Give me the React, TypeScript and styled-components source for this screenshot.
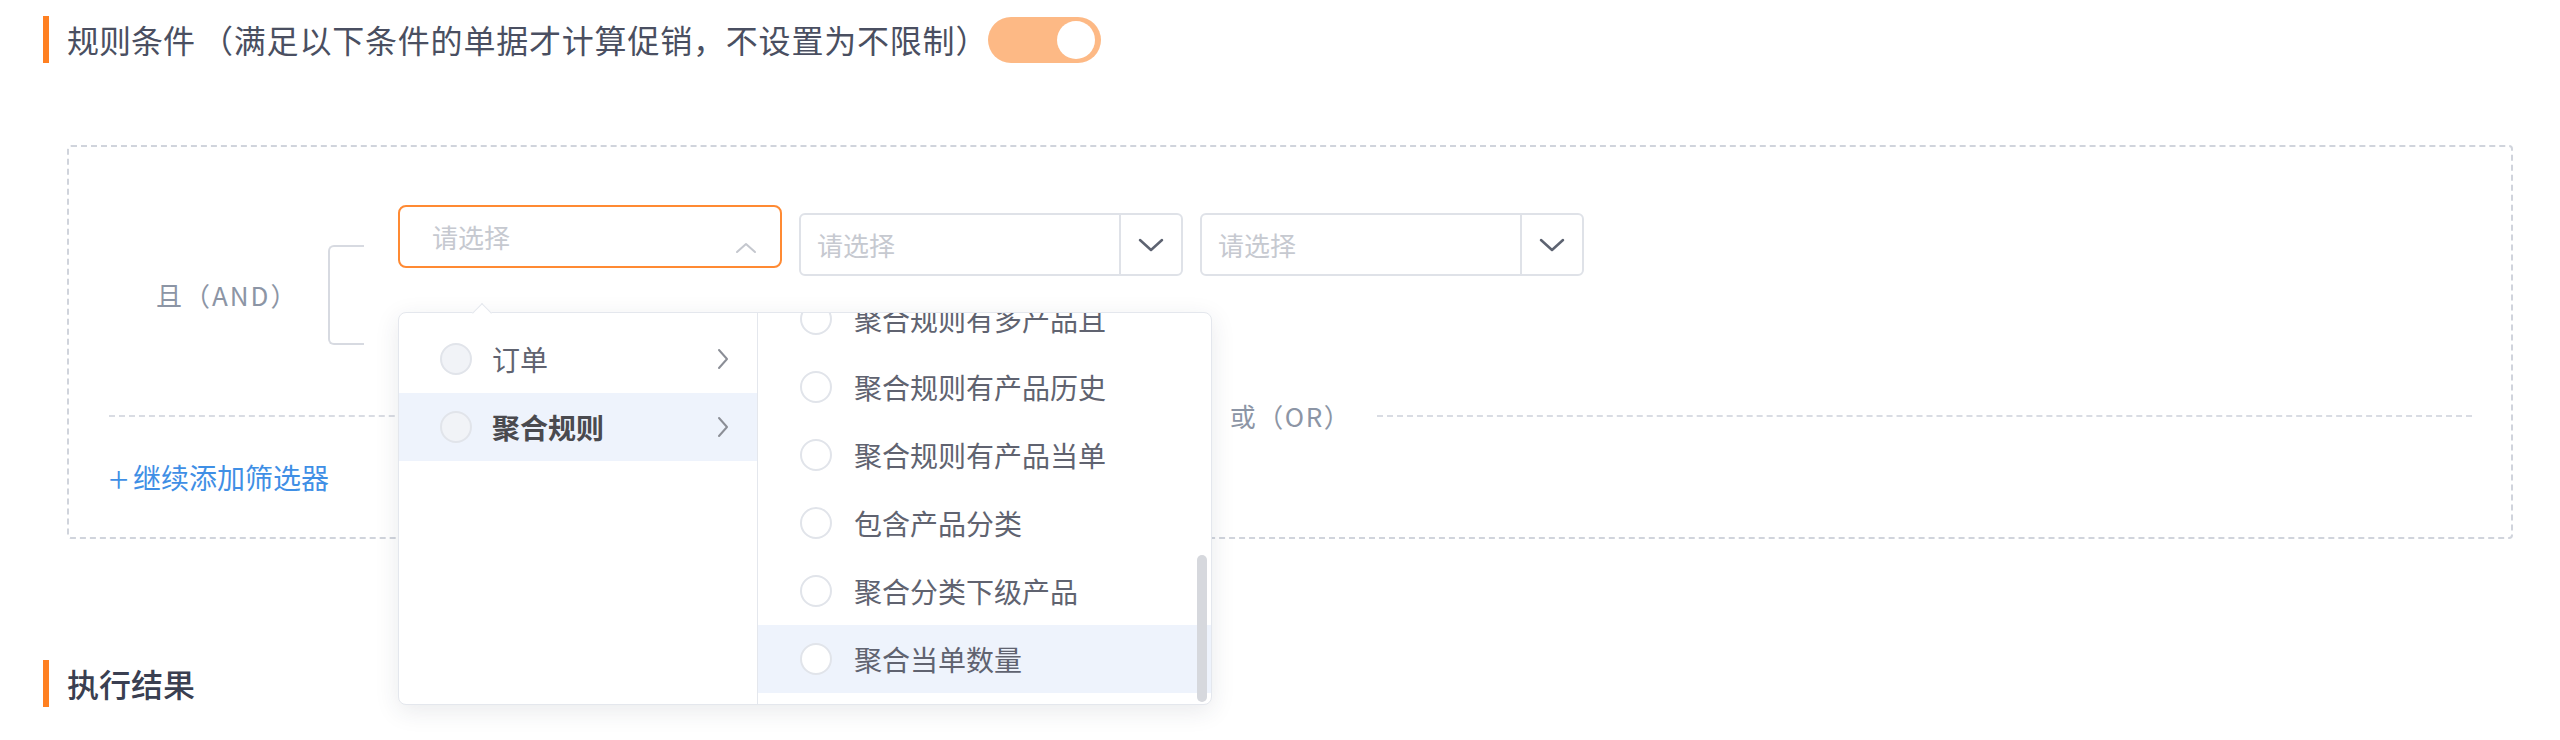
import React, { useLayoutEffect, useRef } from "react";
import styled, { createGlobalStyle } from "styled-components";

const GlobalStyle = createGlobalStyle`
  html, body { margin: 0; padding: 0; background: #ffffff; }
  body { font-family: "Noto Sans CJK SC", "Noto Sans", sans-serif; }
  * { box-sizing: border-box; }
`;

const Page = styled.div`
  width: 2560px;
  height: 740px;
  overflow: hidden;
  padding-top: 16px;
`;

const SectionHeader = styled.div<{ $top?: number }>`
  display: flex;
  align-items: center;
  height: 47px;
  margin-left: 43px;
  margin-top: ${(p) => p.$top ?? 0}px;
`;

const Bar = styled.span`
  width: 6px;
  height: 47px;
  background: #ff8021;
  flex-shrink: 0;
`;

const TitleText = styled.span<{ $strong?: boolean }>`
  margin-left: 18px;
  font-size: 32px;
  line-height: 47px;
  color: ${(p) => (p.$strong ? "#3a3f51" : "#4a4f61")};
  font-weight: ${(p) => (p.$strong ? 500 : 400)};
  white-space: nowrap;
`;

const TitleNote = styled.span`
  margin-left: 6px;
  font-size: 32px;
  line-height: 47px;
  letter-spacing: 0.8px;
  color: #4a4f61;
  white-space: nowrap;
`;

const Toggle = styled.div`
  margin-left: 0;
  width: 113px;
  height: 46px;
  border-radius: 23px;
  background: #fdb985;
  display: flex;
  align-items: center;
  justify-content: flex-end;
  padding-right: 6px;
`;

const Knob = styled.span`
  width: 38px;
  height: 38px;
  border-radius: 50%;
  background: #ffffff;
`;

const RuleBox = styled.div`
  margin: 82px 47px 0 67px;
  height: 394px;
  border: 2px dashed #d0d4dc;
  border-radius: 4px;
  padding: 58px 39px 40px 40px;
`;

const Group = styled.div`
  display: flex;
  align-items: flex-start;
  margin-left: 47px;
`;

const GroupSide = styled.div`
  display: flex;
  align-items: center;
  margin-top: 40px;
  height: 100px;
`;

const GroupLabel = styled.span`
  width: 172px;
  font-size: 26px;
  line-height: 36px;
  letter-spacing: 2px;
  color: #8c95a5;
  white-space: nowrap;
`;

const Bracket = styled.span`
  width: 36px;
  height: 100px;
  border: 2px solid #d7dae1;
  border-right: 0;
  border-radius: 6px 0 0 6px;
  margin-right: 34px;
`;

const Selects = styled.div`
  display: flex;
  align-items: flex-start;
  gap: 17px;
`;

const CascaderWrap = styled.div`
  position: relative;
  width: 384px;
`;

const CascaderInput = styled.div`
  height: 63px;
  border: 2px solid #ff8a33;
  border-radius: 8px;
  display: flex;
  align-items: center;
  justify-content: space-between;
  padding: 0 23px 0 32px;
  background: #fff;
`;

const Placeholder = styled.span`
  font-size: 26px;
  line-height: 36px;
  color: #c6c9d0;
  white-space: nowrap;
`;

const UpArrow = styled.svg`
  margin-top: 22px;
`;

const Select = styled.div`
  margin-top: 8px;
  width: 384px;
  height: 63px;
  border: 2px solid #dfe2e8;
  border-radius: 6px;
  display: flex;
  background: #fff;
`;

const SelectValue = styled.div`
  flex: 1;
  display: flex;
  align-items: center;
  padding-left: 16px;
`;

const SelectArrow = styled.div`
  width: 62px;
  border-left: 2px solid #dfe2e8;
  display: flex;
  align-items: center;
  justify-content: center;
`;

const Dropdown = styled.div`
  position: absolute;
  top: 107px;
  left: 0;
  width: 814px;
  height: 393px;
  display: flex;
  background: #fff;
  border: 1px solid #e4e7ed;
  border-radius: 8px;
  box-shadow: 0 6px 24px rgba(40, 50, 70, 0.1);
  z-index: 10;
`;

const Caret = styled.span`
  position: absolute;
  top: -7px;
  left: 76px;
  width: 14px;
  height: 14px;
  background: #fff;
  border-top: 1px solid #e4e7ed;
  border-left: 1px solid #e4e7ed;
  transform: rotate(45deg);
`;

const LeftCol = styled.div`
  width: 359px;
  flex-shrink: 0;
  border-right: 1px solid #e4e7ed;
  padding-top: 12px;
`;

const RightCol = styled.div`
  position: relative;
  flex: 1;
  overflow: hidden;
  border-radius: 0 8px 8px 0;
`;

const RightScroll = styled.div`
  height: 100%;
  overflow: hidden;
  padding: 12px 0 11px;
`;

const MenuItem = styled.div<{ $active?: boolean; $pad: number }>`
  height: 68px;
  display: flex;
  align-items: center;
  padding: 0 28px 0 ${(p) => p.$pad}px;
  background: ${(p) => (p.$active ? "#eef3fc" : "transparent")};
`;

const Radio = styled.span<{ $filled?: boolean }>`
  width: 32px;
  height: 32px;
  flex-shrink: 0;
  border-radius: 50%;
  border: 2px solid #e1e4ea;
  background: ${(p) => (p.$filled ? "#f1f3f7" : "#ffffff")};
`;

const ItemText = styled.span<{ $bold?: boolean; $gap: number }>`
  flex: 1;
  margin-left: ${(p) => p.$gap}px;
  font-size: 28px;
  line-height: 40px;
  color: ${(p) => (p.$bold ? "#4a4a4f" : "#606370")};
  font-weight: ${(p) => (p.$bold ? 700 : 400)};
  white-space: nowrap;
`;

const Thumb = styled.span`
  position: absolute;
  right: 4px;
  top: 242px;
  width: 10px;
  height: 147px;
  border-radius: 5px;
  background: #d6d8dd;
`;

const OrDivider = styled.div`
  display: flex;
  align-items: center;
  height: 36px;
  margin-top: 53px;
`;

const DashLine = styled.span`
  flex: 1;
  height: 0;
  border-top: 2px dashed #d9dce3;
`;

const OrText = styled.span`
  margin: 0 26px;
  font-size: 26px;
  line-height: 36px;
  letter-spacing: 1.5px;
  color: #8c95a5;
  white-space: nowrap;
`;

const AddLink = styled.a`
  display: inline-flex;
  align-items: center;
  margin-top: 23px;
  height: 40px;
  font-size: 28px;
  line-height: 40px;
  color: #3f8fe5;
  text-decoration: none;
  white-space: nowrap;
`;

const Plus = styled.span`
  width: 24px;
  font-size: 36px;
  font-weight: 300;
  line-height: 40px;
  text-align: left;
`;

const ChevronDown = () => (
  <svg width="26" height="14" viewBox="0 0 26 14">
    <path d="M2 2 L13 12 L24 2" fill="none" stroke="#5d6371" strokeWidth="2.5" strokeLinecap="round" strokeLinejoin="round" />
  </svg>
);

const ChevronRight = () => (
  <svg width="12" height="22" viewBox="0 0 12 22">
    <path d="M2 2 L10 11 L2 20" fill="none" stroke="#8b8e96" strokeWidth="2" strokeLinecap="round" strokeLinejoin="round" />
  </svg>
);

const leftItems = [
  { label: "订单", active: false },
  { label: "聚合规则", active: true },
];

const rightItems = [
  "聚合规则金额",
  "聚合规则数量",
  "聚合规则有产品",
  "聚合规则无产品",
  "聚合规则有产品分类",
  "聚合规则无产品分类",
  "聚合规则有多产品或",
  "聚合规则无多产品",
  "聚合规则历史金额",
  "聚合规则有多产品且",
  "聚合规则有产品历史",
  "聚合规则有产品当单",
  "包含产品分类",
  "聚合分类下级产品",
  "聚合当单数量",
];

export default function App() {
  const scrollRef = useRef<HTMLDivElement>(null);
  useLayoutEffect(() => {
    const el = scrollRef.current;
    if (el) el.scrollTop = el.scrollHeight;
  }, []);

  return (
    <Page>
      <GlobalStyle />
      <SectionHeader>
        <Bar />
        <TitleText>规则条件</TitleText>
        <TitleNote>（满足以下条件的单据才计算促销，不设置为不限制）</TitleNote>
        <Toggle>
          <Knob />
        </Toggle>
      </SectionHeader>

      <RuleBox>
        <Group>
          <GroupSide>
            <GroupLabel>且（AND）</GroupLabel>
            <Bracket />
          </GroupSide>
          <Selects>
            <CascaderWrap>
              <CascaderInput>
                <Placeholder>请选择</Placeholder>
                <UpArrow width="22" height="12" viewBox="0 0 22 12">
                  <path d="M2 10 L11 2 L20 10" fill="none" stroke="#c4c7ce" strokeWidth="2" strokeLinecap="round" strokeLinejoin="round" />
                </UpArrow>
              </CascaderInput>
              <Dropdown>
                <Caret />
                <LeftCol>
                  {leftItems.map((it) => (
                    <MenuItem key={it.label} $active={it.active} $pad={41}>
                      <Radio $filled />
                      <ItemText $bold={it.active} $gap={20}>{it.label}</ItemText>
                      <ChevronRight />
                    </MenuItem>
                  ))}
                </LeftCol>
                <RightCol>
                  <RightScroll ref={scrollRef}>
                    {rightItems.map((label, i) => (
                      <MenuItem key={label} $active={i === rightItems.length - 1} $pad={42}>
                        <Radio />
                        <ItemText $gap={22}>{label}</ItemText>
                      </MenuItem>
                    ))}
                  </RightScroll>
                  <Thumb />
                </RightCol>
              </Dropdown>
            </CascaderWrap>
            <Select>
              <SelectValue>
                <Placeholder>请选择</Placeholder>
              </SelectValue>
              <SelectArrow>
                <ChevronDown />
              </SelectArrow>
            </Select>
            <Select>
              <SelectValue>
                <Placeholder>请选择</Placeholder>
              </SelectValue>
              <SelectArrow>
                <ChevronDown />
              </SelectArrow>
            </Select>
          </Selects>
        </Group>
        <OrDivider>
          <DashLine />
          <OrText>或（OR）</OrText>
          <DashLine />
        </OrDivider>
        <AddLink>
          <Plus>+</Plus>
          继续添加筛选器
        </AddLink>
      </RuleBox>

      <SectionHeader $top={121}>
        <Bar />
        <TitleText $strong>执行结果</TitleText>
      </SectionHeader>
    </Page>
  );
}
